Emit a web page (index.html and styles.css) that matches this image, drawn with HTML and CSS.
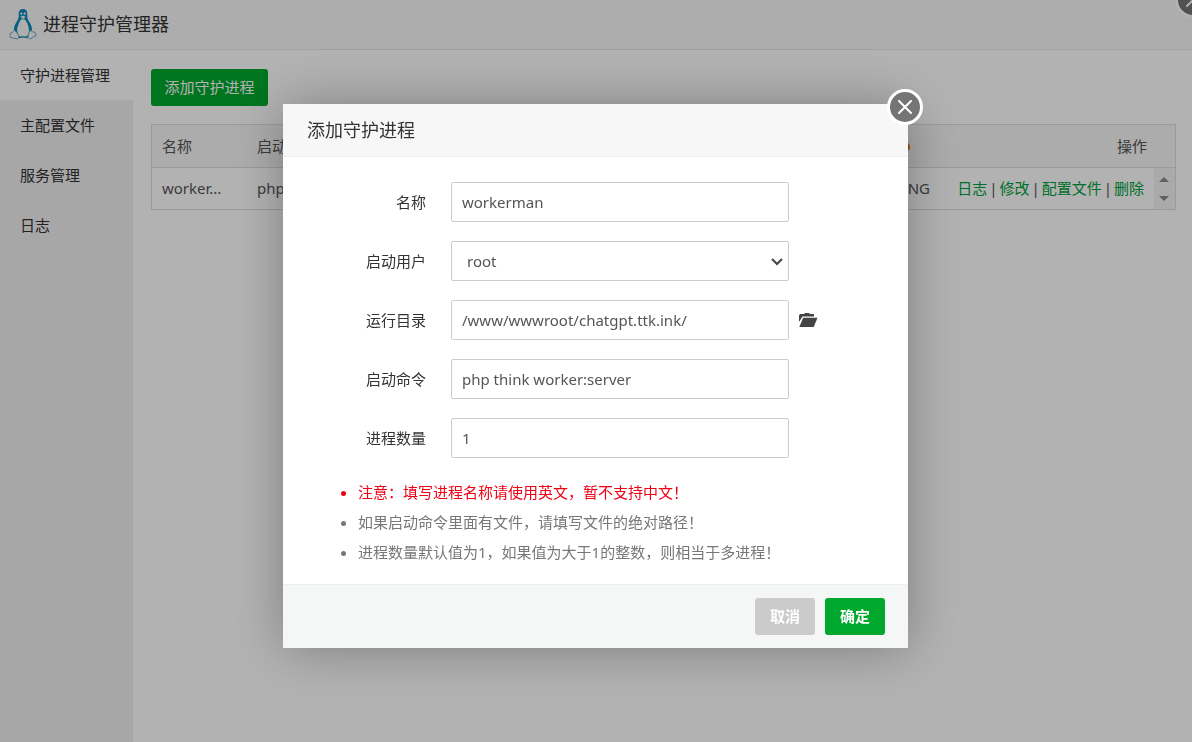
FILE: index.html
```html
<!DOCTYPE html>
<html lang="zh-CN">
<head>
<meta charset="utf-8">
<title>进程守护管理器</title>
<link rel="stylesheet" href="styles.css">
</head>
<body>
<div class="app">
  <header class="app-header">
    <svg class="logo" viewBox="0 0 28 32" aria-hidden="true">
      <path d="M14 1c-3 0-4.500 2-4.300 5.200.2 3.200-.2 4.600-1.900 7.300C6 16.500 4.600 19 5 23l3 6h12l3-6c.3-4-1.300-7-3.200-9.700-1.500-2.300-1.600-4.300-1.500-7C18.400 3 17 1 14 1z" fill="#0a8bb8"/>
      <path d="M14 11c-2.500 0-3.300 2.500-4.300 5-1.300 3-2.200 6-1 9.500 1 3 3.300 4 5.600 4s4.700-1.500 5.400-4.500c.7-3.200 0-6.400-1.300-9.200C17.300 13.300 16.500 11 14 11z" fill="#fafafa"/>
      <path d="M10.800 8.800 14 7.200l3 1.600-2.600 2.600z" fill="#eef5f8" stroke="#0a8bb8" stroke-width=".6"/>
      <circle cx="12.300" cy="5.600" r="1.100" fill="#fff"/><circle cx="15.700" cy="5.600" r="1.100" fill="#fff"/>
      <path d="M5.200 22.300c1.500.3 3.500 3.600 4.800 5.700.6 1.500-.8 3-2.600 2.800-2-.3-4-.9-6.200-1.400-.7-1.200.2-2.500.1-4.200 1.500-.5 2.900-.6 3.900-2.900z" fill="#f8f8f8" stroke="#4695ad" stroke-width=".8"/>
      <path d="M22 22.300c-1.200.5-2.800 3.400-3 5.700-.2 2 1.200 3 2.700 2.600 1.600-.8 3.300-2.200 5.500-3.200-.1-1.100-1.400-2-1.400-3.400-1.300.3-2.900.1-3.800-1.700z" fill="#f8f8f8" stroke="#4695ad" stroke-width=".8"/>
      <path d="M9.500 29.600c2.500-.8 6.500-.8 9 0" stroke="#0a7ba5" stroke-width="1.400" fill="none"/>
    </svg>
    <h1 class="app-title">进程守护管理器</h1>
  </header>
  <div class="app-body">
    <nav class="sidebar">
      <a class="nav-item active" href="#">守护进程管理</a>
      <a class="nav-item" href="#">主配置文件</a>
      <a class="nav-item" href="#">服务管理</a>
      <a class="nav-item" href="#">日志</a>
    </nav>
    <main class="content">
      <button class="btn btn-add" type="button">添加守护进程</button>
      <table class="process-table">
        <colgroup>
          <col class="col-name">
          <col>
          <col class="col-status">
          <col class="col-actions">
          <col class="col-scroll">
        </colgroup>
        <thead>
          <tr>
            <th>名称</th>
            <th>启动命令</th>
            <th class="status-head"><span class="status-dot"></span></th>
            <th class="actions-head" colspan="2">操作</th>
          </tr>
        </thead>
        <tbody>
          <tr>
            <td>worker...</td>
            <td>php think</td>
            <td class="status">RUNNING</td>
            <td class="actions">
              <div class="action-links">
                <a href="#">日志</a><span>|</span><a href="#">修改</a><span>|</span><a href="#">配置文件</a><span>|</span><a href="#">删除</a>
              </div>
            </td>
            <td class="scroll-cell">
              <div class="scroll-arrows">
                <svg width="10" height="5" viewBox="0 0 10 5"><path d="M0 5 5 0l5 5z"/></svg>
                <svg width="10" height="5" viewBox="0 0 10 5"><path d="m0 0 5 5 5-5z"/></svg>
              </div>
            </td>
          </tr>
        </tbody>
      </table>
    </main>
  </div>
  <button class="close close-window" type="button" aria-label="关闭窗口">
    <svg width="14" height="14" viewBox="0 0 14 14"><path d="m1 1 12 12M13 1 1 13"/></svg>
  </button>
</div>

<div class="overlay">
  <form class="dialog" role="dialog" aria-labelledby="dialog-title">
    <h2 class="dialog-title" id="dialog-title">添加守护进程</h2>
    <button class="close close-dialog" type="button" aria-label="关闭">
      <svg width="14" height="14" viewBox="0 0 14 14"><path d="m1 1 12 12M13 1 1 13"/></svg>
    </button>
    <div class="dialog-body">
      <div class="field">
        <label for="name">名称</label>
        <input class="control" id="name" type="text" value="workerman">
      </div>
      <div class="field">
        <label for="user">启动用户</label>
        <div class="select-wrap">
          <select class="control" id="user"><option>root</option></select>
          <svg class="chevron" width="12" height="8" viewBox="0 0 12 8"><path d="m1 1 5 5 5-5"/></svg>
        </div>
      </div>
      <div class="field">
        <label for="dir">运行目录</label>
        <input class="control" id="dir" type="text" value="/www/wwwroot/chatgpt.ttk.ink/">
        <button class="browse" type="button" aria-label="选择目录">
          <svg width="20" height="16" viewBox="0 0 20 16"><path d="M1 10V3.500L2 2h4l1-1h4l1 1h4v2.500H4.500z"/><path d="M5.200 5.700H19.500L15.700 15H1.300z"/></svg>
        </button>
      </div>
      <div class="field">
        <label for="command">启动命令</label>
        <input class="control" id="command" type="text" value="php think worker:server">
      </div>
      <div class="field">
        <label for="count">进程数量</label>
        <input class="control" id="count" type="text" value="1">
      </div>
      <ul class="notes">
        <li class="warn">注意：填写进程名称请使用英文，暂不支持中文！</li>
        <li>如果启动命令里面有文件，请填写文件的绝对路径！</li>
        <li>进程数量默认值为1，如果值为大于1的整数，则相当于多进程！</li>
      </ul>
    </div>
    <footer class="dialog-footer">
      <button class="btn btn-cancel" type="button">取消</button>
      <button class="btn btn-ok" type="submit">确定</button>
    </footer>
  </form>
</div>
</body>
</html>
```

FILE: styles.css
```css
* {
  box-sizing: border-box;
}

body {
  margin: 0;
  background: #fff;
  color: #555;
  font: 15px/20px "Noto Sans", "Noto Sans CJK SC", sans-serif;
}

button,
input,
select {
  font: inherit;
}

.app {
  position: relative;
  display: flex;
  flex-direction: column;
  min-height: 100vh;
  overflow: hidden;
}

.app-header {
  display: flex;
  align-items: center;
  gap: 6px;
  height: 50px;
  padding: 0 9px 2px;
  background: #f8f8f8;
  border-bottom: 1px solid #e8e8e8;
}

.logo {
  width: 28px;
  height: 32px;
}

.app-title {
  margin: 0;
  color: #333;
  font-size: 18px;
  font-weight: 400;
  line-height: 24px;
}

.app-body {
  display: flex;
  flex: 1;
}

.sidebar {
  width: 133px;
  flex: none;
  background: #f0eff1;
}

.nav-item {
  display: block;
  padding-left: 20px;
  color: #333;
  line-height: 50px;
  text-decoration: none;
}

.nav-item.active {
  background: #fff;
}

.content {
  flex: 1;
  padding: 19px 16px 0 18px;
}

.btn {
  height: 37px;
  padding: 0 0 2px;
  border: 0;
  border-radius: 3px;
  color: #fff;
  background: #00a82d;
}

.btn-add {
  width: 117px;
}

.process-table {
  width: 100%;
  margin-top: 18px;
  border: 1px solid #ddd;
  border-collapse: separate;
  border-spacing: 0;
  table-layout: fixed;
}

.process-table th,
.process-table td {
  height: 41px;
  padding: 0 10px 1px;
  font-weight: 400;
  text-align: left;
  white-space: nowrap;
}

.process-table th {
  height: 43px;
  background: #f6f6f6;
  border-bottom: 1px solid #ddd;
}

.col-name {
  width: 95px;
}

.col-status {
  width: 110px;
}

.col-actions {
  width: 214px;
}

.col-scroll {
  width: 21px;
}

.process-table .status-head {
  padding-right: 30px;
  text-align: right;
}

.process-table .actions-head {
  padding-right: 28px;
  text-align: right;
}

.status-dot {
  display: inline-block;
  width: 10px;
  height: 10px;
  border-radius: 5px;
  background: #e8730c;
}

.process-table .status {
  text-align: right;
}

.action-links {
  display: flex;
  justify-content: flex-end;
  gap: 2px;
}

.action-links a {
  color: #00a03c;
  text-decoration: none;
}

.process-table .scroll-cell {
  padding: 0;
  background: #f4f4f4;
}

.scroll-arrows {
  display: flex;
  flex-direction: column;
  align-items: center;
  gap: 14px;
  fill: #8a8a8a;
}

.overlay {
  position: fixed;
  inset: 0;
  display: flex;
  align-items: center;
  justify-content: center;
  padding: 10px 1px 0 0;
  background: rgba(0, 0, 0, 0.3);
}

.dialog {
  position: relative;
  width: 625px;
  max-width: 100%;
  margin: 0;
  background: #fff;
  box-shadow: 1px 1px 50px rgba(0, 0, 0, 0.3);
}

.dialog-title {
  margin: 0;
  padding: 0 24px;
  background: #f7f7f7;
  border-bottom: 1px solid #eee;
  color: #333;
  font-size: 18px;
  font-weight: 400;
  line-height: 52px;
}

.close {
  position: absolute;
  display: flex;
  align-items: center;
  justify-content: center;
  width: 36px;
  height: 36px;
  padding: 0;
  border: 3px solid #fff;
  border-radius: 18px;
  background: #757575;
}

.close path {
  fill: none;
  stroke: #fff;
  stroke-width: 2;
  stroke-linecap: round;
}

.close-window {
  top: -18px;
  right: -19px;
}

.close-dialog {
  top: -15px;
  right: -15px;
}

.dialog-body {
  display: flex;
  flex-direction: column;
  gap: 19px;
  padding: 25px 25px 17px;
}

.field {
  display: flex;
  align-items: center;
}

.field label {
  width: 118px;
  margin-right: 25px;
  color: #333;
  text-align: right;
}

.control {
  width: 338px;
  height: 40px;
  padding: 0 10px;
  border: 1px solid #ccc;
  border-radius: 2px;
  background: #fff;
  color: #555;
}

.select-wrap {
  position: relative;
}

.select-wrap .control {
  display: block;
  padding: 0 15px;
  appearance: none;
}

.chevron {
  position: absolute;
  top: 17px;
  right: 6px;
  fill: none;
  stroke: #444;
  stroke-width: 2;
  pointer-events: none;
}

.browse {
  display: flex;
  margin-left: 9px;
  padding: 0;
  border: 0;
  background: none;
  fill: #444;
}

.notes {
  margin: 0;
  padding-left: 50px;
  color: #777;
  line-height: 30px;
}

.notes .warn {
  color: #f00014;
}

.dialog-footer {
  display: flex;
  justify-content: flex-end;
  gap: 10px;
  padding: 13px 23px;
  border-top: 1px solid #eee;
  background: #f5f6f6;
}

.dialog-footer .btn {
  width: 60px;
  font-weight: 700;
}

.dialog-footer .btn-cancel {
  background: #cbcbcb;
}
```
